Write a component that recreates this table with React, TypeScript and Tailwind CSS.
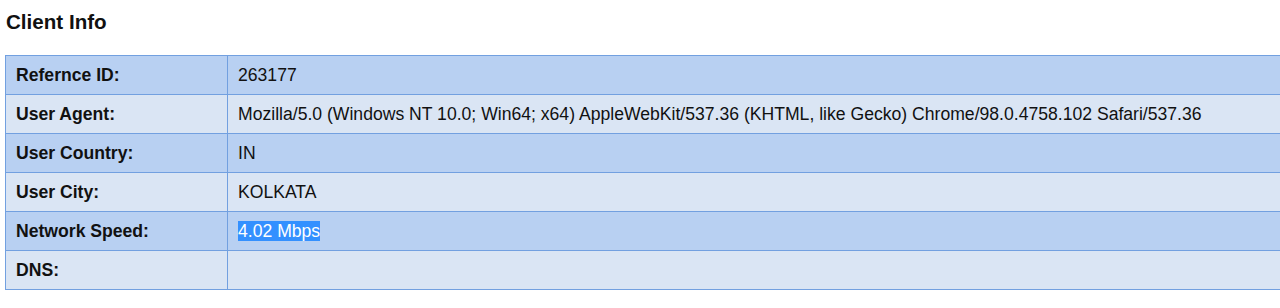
const rows: { label: string; value: string; selected?: boolean }[] = [
  { label: 'Refernce ID:', value: '263177' },
  {
    label: 'User Agent:',
    value:
      'Mozilla/5.0 (Windows NT 10.0; Win64; x64) AppleWebKit/537.36 (KHTML, like Gecko) Chrome/98.0.4758.102 Safari/537.36',
  },
  { label: 'User Country:', value: 'IN' },
  { label: 'User City:', value: 'KOLKATA' },
  { label: 'Network Speed:', value: '4.02 Mbps', selected: true },
  { label: 'DNS:', value: '' },
];

const App = () => {
  return (
    <div className="w-[1280px] h-[308px] overflow-hidden bg-white text-[#111] font-['Liberation_Sans',Arial,sans-serif]">
      <h4 className="pl-[6px] pt-[9px] text-[20.6px] leading-[25px] font-bold">Client Info</h4>
      <table className="ml-[5px] mt-[21px] w-[1300px] border-collapse text-[17.6px] leading-[20px]">
        <tbody>
          {rows.map((row, i) => (
            <tr key={row.label} className={i % 2 === 0 ? 'bg-[#b8d0f2]' : 'bg-[#dae5f4]'}>
              <td className="w-[222px] border border-[#72a0e0] px-[10px] py-[9px] font-bold">{row.label}</td>
              <td className="border border-[#72a0e0] px-[10px] py-[9px]">
                {row.selected ? <span className="bg-[#3390ff] text-white">{row.value}</span> : row.value}
                {!row.value && <span>&nbsp;</span>}
              </td>
            </tr>
          ))}
        </tbody>
      </table>
    </div>
  );
};

export default App;
